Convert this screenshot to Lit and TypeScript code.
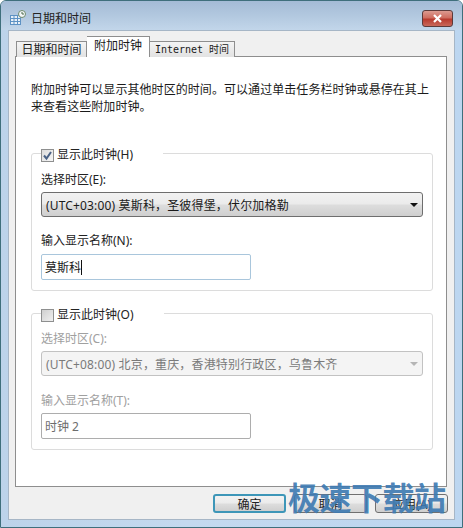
import { LitElement, html, css } from 'lit';
import { customElement } from 'lit/decorators.js';

@customElement('app-root')
export class AppRoot extends LitElement {
  static styles = css`
    :host {
      display: block;
      width: 463px;
      height: 528px;
      position: relative;
      overflow: hidden;
      font-family: "Noto Sans", "Noto Sans CJK SC", sans-serif;
      font-size: 12px;
      color: #1a1a1a;
    }
    .frame {
      box-sizing: border-box;
      width: 463px;
      height: 528px;
      border: 1px solid #3f6f7c;
      border-radius: 6px 6px 0 0;
      background: linear-gradient(90deg, #bcd3ea 0, #c4d9ef 40%, #bcd6f0 100%);
      display: flex;
      flex-direction: column;
      padding: 0 7px 7px;
    }
    .titlebar {
      box-sizing: border-box;
      height: 29px;
      margin: 0 -7px;
      padding: 4px 9px 0 9px;
      display: flex;
      align-items: center;
      gap: 5px;
      flex: none;
      background: linear-gradient(180deg, #a4bbd6 0, #b2c8df 50%, #c2d6ea 100%);
      border-radius: 5px 5px 0 0;
    }
    .title {
      flex: 1;
      font-size: 12px;
      color: #222;
    }
    .close {
      width: 31px;
      height: 17px;
      margin-top: 2px;
      box-sizing: border-box;
      border: 1px solid #5c3a3a;
      border-radius: 3px;
      background: linear-gradient(180deg, #dc9a90 0, #cf6d60 45%, #b83a2e 55%, #c8685a 100%);
      display: flex;
      align-items: center;
      justify-content: center;
    }
    .panel {
      flex: 1;
      background: #f0f0f0;
      border: 1px solid #a6b6c6;
      padding: 6px 7px 0 6px;
      display: flex;
      flex-direction: column;
      min-height: 0;
    }
    .tabs {
      display: flex;
      align-items: flex-end;
      height: 20px;
      flex: none;
      position: relative;
      z-index: 1;
      margin-bottom: -1px;
    }
    .tab {
      box-sizing: border-box;
      height: 16px;
      border: 1px solid #8e8e8e;
      border-bottom: none;
      border-left: none;
      background: linear-gradient(180deg, #f4f4f4, #e2e2e2);
      display: flex;
      align-items: center;
      justify-content: center;
      font-size: 12px;
      line-height: 1;
    }
    .tab.first { width: 71px; border-left: 1px solid #8e8e8e; margin-left: 1px; }
    .tab.active {
      width: 63px;
      height: 21px;
      background: #fff;
      padding-bottom: 2px;
    }
    .tab.latin { width: 85px; font-family: "DejaVu Sans Mono", "Noto Sans CJK SC", monospace; font-size: 10px; }
    .page {
      flex: none;
      height: 431px;
      box-sizing: border-box;
      background: #fff;
      border: 1px solid #8e8e8e;
      padding: 24px 13px 0 15px;
    }
    .intro {
      margin: 0;
      font-size: 12px;
      line-height: 17px;
      white-space: nowrap;
      letter-spacing: 0.06px;
    }
    .group {
      box-sizing: border-box;
      height: 138px;
      margin-top: 38px;
      border: 1px solid #dcdcdc;
      border-radius: 3px;
      padding: 18px 9px 0;
      position: relative;
    }
    .group.off { height: 137px; margin-top: 22px; padding-top: 17px; }
    .legend {
      display: flex;
      align-items: center;
      gap: 3px;
      position: absolute;
      left: 9px;
      top: -8px;
      height: 18px;
      padding-right: 30px;
      background: #fff;
    }
    .check {
      box-sizing: border-box;
      width: 13px;
      height: 13px;
      border: 1px solid #8e8f8f;
      background: linear-gradient(135deg, #dcdcdc, #f6f6f6);
      display: flex;
      align-items: center;
      justify-content: center;
    }
    .lbl { font-size: 12px; line-height: 16px; color: #222; }
    .combo {
      box-sizing: border-box;
      height: 25px;
      margin-top: 4px;
      border: 1px solid #6e6e6e;
      border-radius: 3px;
      background: linear-gradient(180deg, #f2f2f2 0, #ebebeb 48%, #dddddd 52%, #cfcfcf 100%);
      display: flex;
      align-items: center;
      justify-content: space-between;
      padding: 0 4px 0 4px;
      font-size: 12px;
      letter-spacing: 0.16px;
    }
    .arrow {
      width: 0;
      height: 0;
      border-left: 4px solid transparent;
      border-right: 4px solid transparent;
      border-top: 4px solid #111;
    }
    .field-label { margin-top: 16px; }
    .input {
      box-sizing: border-box;
      width: 210px;
      height: 26px;
      margin-top: 5px;
      border: 1px solid #a9c6dc;
      border-radius: 2px;
      background: #fff;
      display: flex;
      align-items: center;
      padding: 0 3px;
      font-size: 12px;
    }
    .caret { width: 1px; height: 15px; background: #111; }
    .off .lbl-dim { color: #a0a0a0; }
    .off .combo {
      background: #f4f4f4;
      border-color: #c2c2c2;
      color: #7a7a7a;
    }
    .off .arrow { border-top-color: #b5b5b5; }
    .off .field-label { margin-top: 17px; }
    .off .input { border-color: #adadad; color: #6d6d6d; margin-top: 4px; }
    .off .check { background: linear-gradient(135deg, #cfcfcf, #f0f0f0); }
    .buttons {
      flex: 1;
      display: flex;
      justify-content: flex-end;
      align-items: center;
      gap: 8px;
      padding-top: 1px;
      margin-right: -1px;
    }
    .btn {
      box-sizing: border-box;
      width: 73px;
      height: 19px;
      border: 1px solid #707070;
      border-radius: 3px;
      background: linear-gradient(180deg, #f2f2f2 0, #ebebeb 48%, #dddddd 52%, #cfcfcf 100%);
      display: flex;
      align-items: center;
      justify-content: center;
      font-size: 12px;
      color: #222;
    }
    .btn.primary { border: 2px solid #3d96b8; }
    .watermark {
      position: absolute;
      left: 288px;
      top: 478px;
      font-size: 32px;
      line-height: 40px;
      font-weight: 700;
      color: rgba(62, 122, 178, 0.92);
      white-space: nowrap;
      letter-spacing: -0.5px;
    }
  `;

  private appIcon() {
    return html`<svg width="16" height="15" viewBox="0 0 16 15">
      <rect x="0.500" y="5.500" width="10" height="9" fill="#e8f0f8" stroke="#5d92c4"/>
      <path d="M1 8.500h10M1 11.500h10M4 6v8M7.500 6v8" stroke="#5d92c4" fill="none"/>
      <circle cx="12" cy="4" r="3.500" fill="#f4f7f9" stroke="#6f8b6e"/>
      <path d="M12 2v2h2" stroke="#4a6a4a" fill="none"/>
    </svg>`;
  }

  private group(opts: {
    off: boolean; legend: string; zoneLabel: string; zone: string; nameLabel: string; name: string;
  }) {
    return html`<div class="group ${opts.off ? 'off' : ''}">
      <div class="legend">
        <span class="check">
          ${opts.off
            ? ''
            : html`<svg width="11" height="11" viewBox="0 0 11 11"><path d="M2 5.500l2.500 3L9 2" fill="none" stroke="#4a6286" stroke-width="2"/></svg>`}
        </span>
        <span class="lbl">${opts.legend}</span>
      </div>
      <div class="lbl lbl-dim">${opts.zoneLabel}</div>
      <div class="combo"><span>${opts.zone}</span><span class="arrow"></span></div>
      <div class="lbl lbl-dim field-label">${opts.nameLabel}</div>
      <div class="input"><span>${opts.name}</span>${opts.off ? '' : html`<span class="caret"></span>`}</div>
    </div>`;
  }

  render() {
    return html`
      <div class="frame">
        <div class="titlebar">
          ${this.appIcon()}
          <span class="title">日期和时间</span>
          <span class="close">
            <svg width="11" height="9" viewBox="0 0 11 9"><path d="M2 1l7 7M9 1L2 8" stroke="#fff" stroke-width="2.200" fill="none"/></svg>
          </span>
        </div>
        <div class="panel">
          <div class="tabs">
            <div class="tab first">日期和时间</div>
            <div class="tab active">附加时钟</div>
            <div class="tab latin">Internet 时间</div>
          </div>
          <div class="page">
            <p class="intro">附加时钟可以显示其他时区的时间。可以通过单击任务栏时钟或悬停在其上<br />来查看这些附加时钟。</p>
            ${this.group({
              off: false,
              legend: '显示此时钟(H)',
              zoneLabel: '选择时区(E):',
              zone: '(UTC+03:00) 莫斯科，圣彼得堡，伏尔加格勒',
              nameLabel: '输入显示名称(N):',
              name: '莫斯科',
            })}
            ${this.group({
              off: true,
              legend: '显示此时钟(O)',
              zoneLabel: '选择时区(C):',
              zone: '(UTC+08:00) 北京，重庆，香港特别行政区，乌鲁木齐',
              nameLabel: '输入显示名称(T):',
              name: '时钟 2',
            })}
          </div>
          <div class="buttons">
            <div class="btn primary">确定</div>
            <div class="btn">取消</div>
            <div class="btn">应用(A)</div>
          </div>
        </div>
      </div>
      <div class="watermark">极速下载站</div>
    `;
  }
}
